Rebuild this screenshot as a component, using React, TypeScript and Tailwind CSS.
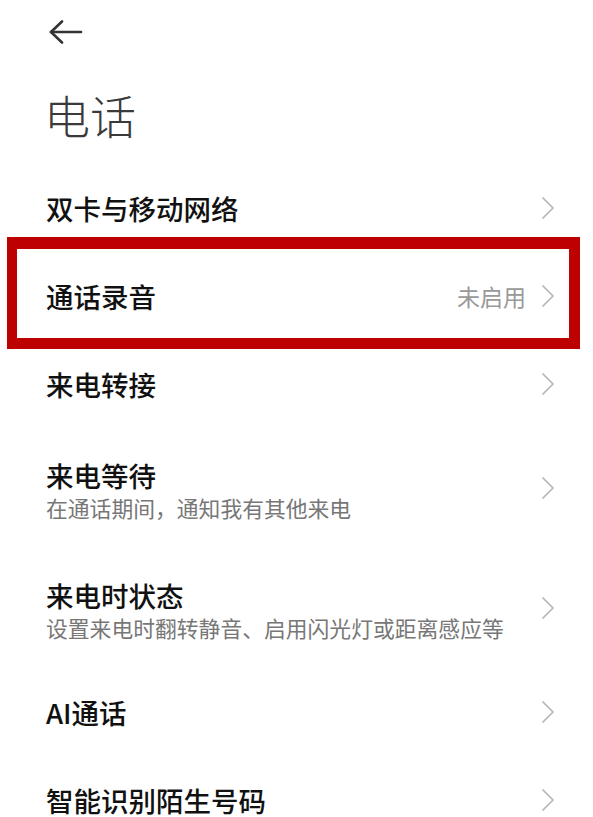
import React from "react";

const Chevron = () => (
  <svg width="14" height="24" viewBox="0 0 14 24" fill="none" className="shrink-0">
    <polyline points="2,2 12,12 2,22" stroke="#b5b5b5" strokeWidth="1.7" strokeLinecap="round" strokeLinejoin="round" />
  </svg>
);

type Item = { title: string; sub?: string; value?: string; boxed?: boolean };

const items: Item[] = [
  { title: "双卡与移动网络" },
  { title: "通话录音", value: "未启用", boxed: true },
  { title: "来电转接" },
  { title: "来电等待", sub: "在通话期间，通知我有其他来电" },
  { title: "来电时状态", sub: "设置来电时翻转静音、启用闪光灯或距离感应等" },
  { title: "AI通话" },
  { title: "智能识别陌生号码" },
];

export default function App() {
  return (
    <div
      className="w-[593px] h-[817px] overflow-hidden bg-white text-[#1a1a1a]"
      style={{ fontFamily: '"Noto Sans CJK SC", "Noto Sans", sans-serif' }}
    >
      <div className="h-[64px] flex items-center pl-[48px]">
        <svg width="36" height="24" viewBox="0 0 36 24" fill="none">
          <line x1="3" y1="12" x2="33" y2="12" stroke="#333" strokeWidth="2.6" strokeLinecap="round" />
          <polyline points="14,1.5 3,12 14,22.5" stroke="#333" strokeWidth="2.6" strokeLinecap="round" strokeLinejoin="round" />
        </svg>
      </div>
      <div className="h-[100px] flex items-center pl-[44px]">
        <span className="text-[46px] font-light leading-none text-[#3a3a3a]">电话</span>
      </div>
      {items.map((it) => (
        <div
          key={it.title}
          className={`relative flex items-center justify-between pl-[46px] pr-[38px] ${it.sub ? "h-[120px]" : "h-[88px]"}`}
        >
          {it.boxed && (
            <div className="absolute top-[-15px] bottom-[-9px] left-[7px] right-[13px] border-[11px] border-t-[12px] border-l-[10px] border-[#bd0000]" />
          )}
          <div className={`flex flex-col ${it.sub ? "pt-[4px]" : ""}`}>
            <span className="text-[27.5px] font-medium leading-[36px] text-[#111]">{it.title}</span>
            {it.sub && (
              <span className="text-[21.8px] leading-[30px] text-[#777]">{it.sub}</span>
            )}
          </div>
          <div className="flex items-center gap-[15px]">
            {it.value && <span className="text-[23px] text-[#999] leading-none">{it.value}</span>}
            <Chevron />
          </div>
        </div>
      ))}
    </div>
  );
}
